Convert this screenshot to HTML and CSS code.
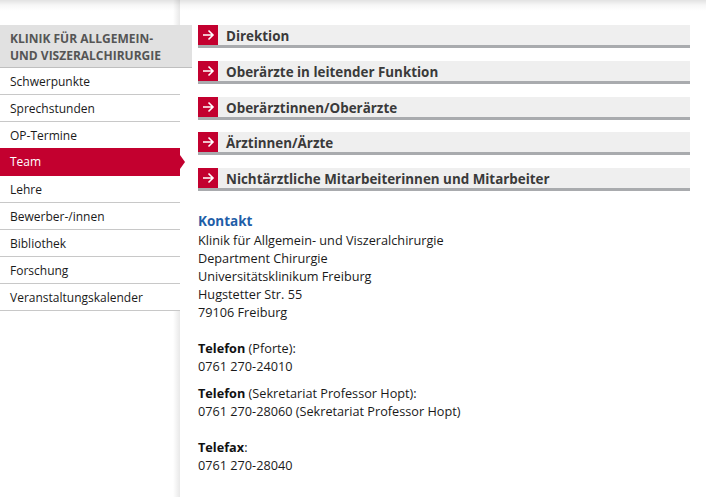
FILE: index.html
```html
<!DOCTYPE html>
<html lang="de">
<head>
<meta charset="utf-8">
<link rel="stylesheet" href="styles.css">
</head>
<body>
<div class="page">
  <nav class="sidebar">
    <div class="side-head">Klinik für Allgemein- und Viszeralchirurgie</div>
    <ul class="side-list">
      <li>Schwerpunkte</li>
      <li>Sprechstunden</li>
      <li>OP-Termine</li>
      <li class="active">Team</li>
      <li>Lehre</li>
      <li>Bewerber-/innen</li>
      <li>Bibliothek</li>
      <li>Forschung</li>
      <li>Veranstaltungskalender</li>
    </ul>
  </nav>
  <main class="content">
    <div class="acc">
      <div class="acc-row"><span class="acc-icon"><svg viewBox="0 0 20 20" width="20" height="20"><path d="M5 10h10M10.5 5.5L15 10l-4.5 4.5" fill="none" stroke="#fff" stroke-width="1.6"/></svg></span><span class="acc-title">Direktion</span></div>
      <div class="acc-row"><span class="acc-icon"><svg viewBox="0 0 20 20" width="20" height="20"><path d="M5 10h10M10.5 5.5L15 10l-4.5 4.5" fill="none" stroke="#fff" stroke-width="1.6"/></svg></span><span class="acc-title">Oberärzte in leitender Funktion</span></div>
      <div class="acc-row"><span class="acc-icon"><svg viewBox="0 0 20 20" width="20" height="20"><path d="M5 10h10M10.5 5.5L15 10l-4.5 4.5" fill="none" stroke="#fff" stroke-width="1.6"/></svg></span><span class="acc-title">Oberärztinnen/Oberärzte</span></div>
      <div class="acc-row"><span class="acc-icon"><svg viewBox="0 0 20 20" width="20" height="20"><path d="M5 10h10M10.5 5.5L15 10l-4.5 4.5" fill="none" stroke="#fff" stroke-width="1.6"/></svg></span><span class="acc-title">Ärztinnen/Ärzte</span></div>
      <div class="acc-row"><span class="acc-icon"><svg viewBox="0 0 20 20" width="20" height="20"><path d="M5 10h10M10.5 5.5L15 10l-4.5 4.5" fill="none" stroke="#fff" stroke-width="1.6"/></svg></span><span class="acc-title">Nichtärztliche Mitarbeiterinnen und Mitarbeiter</span></div>
    </div>
    <div class="contact">
      <h3 class="contact-head">Kontakt</h3>
      <p>Klinik für Allgemein- und Viszeralchirurgie<br>Department Chirurgie<br>Universitätsklinikum Freiburg<br>Hugstetter Str. 55<br>79106 Freiburg</p>
      <p class="gap"><b>Telefon</b> (Pforte):<br>0761 270-24010</p>
      <p class="small-gap"><b>Telefon</b> (Sekretariat Professor Hopt):<br>0761 270-28060 (Sekretariat Professor Hopt)</p>
      <p class="gap"><b>Telefax</b>:<br>0761 270-28040</p>
    </div>
  </main>
</div>
</body>
</html>
```
FILE: styles.css
```css
html, body {
  margin: 0;
  padding: 0;
  background: #fff;
}
body {
  font-family: "Open Sans", "Liberation Sans", sans-serif;
  font-size: 12.7px;
  color: #1a1a1a;
  height: 497px;
  overflow: hidden;
  background: linear-gradient(to bottom, #e2e2e2 0px, #f6f6f6 5px, #fff 11px) no-repeat;
}
.page {
  display: flex;
  min-height: 497px;
}
.sidebar {
  width: 180px;
  flex: 0 0 180px;
  padding-top: 25px;
  background: linear-gradient(to right, rgba(255,255,255,0) 0, rgba(255,255,255,0) 173px, rgba(0,0,0,0.09) 180px);
  position: relative;
}
.side-head {
  background: #e1e1e1;
  color: #555;
  font-weight: bold;
  font-size: 12px;
  text-transform: uppercase;
  line-height: 17px;
  padding: 5px 10px 3px 10px;
  border-bottom: 1px solid #bfbfbf;
  width: 172px;
}
.side-list {
  list-style: none;
  margin: 0;
  padding: 0;
}
.side-list li {
  font-size: 12px;
  height: 25px;
  line-height: 25px;
  padding: 1px 0 0 10px;
  border-bottom: 1px solid #c8c8c8;
  color: #1a1a1a;
  position: relative;
  background: #fff;
}
.side-list li.active {
  background: #c3002f;
  color: #fff;
  border-bottom-color: #c3002f;
  margin-top: -1px;
  height: 26px;
}
.side-list li.active::after {
  content: "";
  position: absolute;
  right: -5px;
  top: 7px;
  border-left: 5px solid #c3002f;
  border-top: 7px solid transparent;
  border-bottom: 7px solid transparent;
}
.content {
  flex: 1;
  padding: 25px 16px 0 18px;
}
.acc-row {
  display: flex;
  align-items: center;
  height: 20px;
  background: #efefef;
  border-bottom: 3px solid #a9abae;
  margin-bottom: 12.75px;
}
.acc-icon {
  width: 20px;
  height: 20px;
  background: #c3002f;
  display: flex;
  flex: 0 0 20px;
}
.acc-title {
  font-weight: bold;
  font-size: 13.4px;
  color: #3a3a3a;
  margin-left: 8px;
  line-height: 20px;
  padding-top: 2px;
}
.contact {
  padding-top: 8px;
}
.contact-head {
  margin: 0;
  font-size: 13.5px;
  font-weight: bold;
  color: #1f5ea8;
  line-height: 19px;
}
.contact p {
  margin: 0;
  line-height: 18px;
}
.contact p.gap {
  margin-top: 18px;
}
.contact p.small-gap {
  margin-top: 9px;
}
.contact b {
  color: #111;
}
```
